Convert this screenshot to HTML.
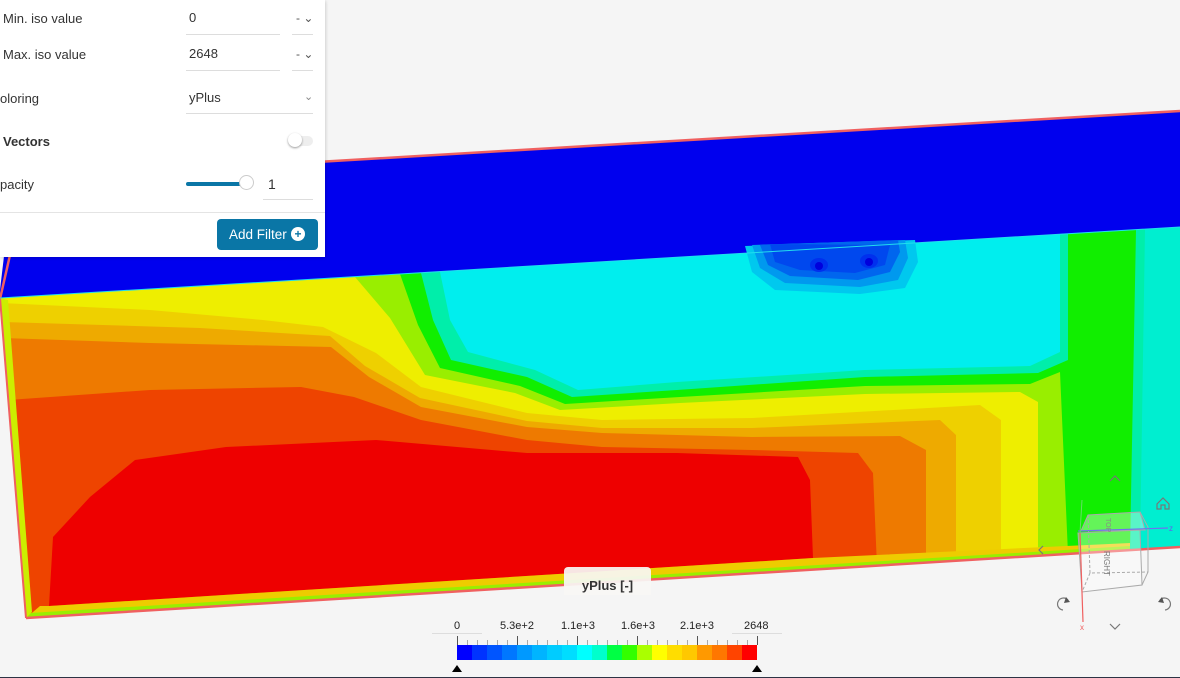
<!DOCTYPE html>
<html><head><meta charset="utf-8">
<style>
html,body{margin:0;padding:0;width:1180px;height:678px;overflow:hidden;background:#f5f5f5;font-family:"Liberation Sans",sans-serif;}
#scene{position:absolute;left:0;top:0;}
.panel{position:absolute;left:0;top:0;width:325px;height:257px;background:#fff;box-shadow:1px 1px 3px rgba(0,0,0,.15);color:#333;font-size:13px;}
.lbl{position:absolute;left:3px;}
.val{position:absolute;left:189px;}
.ul{position:absolute;height:1px;background:#ddd;}
.unit{position:absolute;left:296px;color:#555;font-size:12px;}
.btn{position:absolute;left:217px;top:219px;width:101px;height:31px;background:#0a76a6;border-radius:4px;color:#fff;font-size:13.5px;line-height:31px;}
.leg{position:absolute;font-size:11px;color:#222;}
</style></head><body>
<svg id="scene" width="1180" height="678" viewBox="0 0 1180 678">
<!-- blue strip -->
<polygon points="13,180 1180,111 1180,228 0,299 0,290" fill="#0000ee"/>
<line x1="13" y1="180" x2="1180" y2="111" stroke="#f06060" stroke-width="2.5"/>
<line x1="10" y1="255" x2="0" y2="299" stroke="#f06060" stroke-width="2.5"/>
<!-- plate base -->
<polygon points="0,298 1180,227 1180,547 26,618" fill="#00eeee"/>
<polygon points="1136,230 1180,227 1180,547 1130,550" fill="#00eed0"/>
<!-- blue blob -->
<polygon points="745,246 752,272 775,290 860,294 905,288 918,262 915,240" fill="#00c8ee"/>
<polygon points="752,245 760,268 785,283 860,287 898,280 908,258 905,240" fill="#0099ee"/>
<polygon points="760,245 768,265 790,276 858,280 890,272 900,252 898,240" fill="#0066ee"/>
<polygon points="770,244 775,262 800,270 855,273 885,265 890,245" fill="#0048ee"/>
<ellipse cx="819" cy="265" rx="9" ry="7" fill="#0030ee"/>
<ellipse cx="869" cy="261" rx="9" ry="7" fill="#0030ee"/>
<ellipse cx="819" cy="266" rx="4" ry="4" fill="#0000dd"/>
<ellipse cx="869" cy="262" rx="4" ry="4" fill="#0000dd"/>
<!-- teal band -->
<polygon points="440,272 450,320 468,352 535,370 578,390 677,382 865,370 1030,366 1060,352 1060,234 1145,229 1140,550 26,618 0,298" fill="#00eeaa"/>
<!-- green -->
<polygon points="421,273 433,320 451,360 527,377 572,397 677,390 865,377 1038,373 1068,360 1068,234 1136,230 1130,550 26,618 0,298" fill="#11ee00"/>
<!-- lime -->
<polygon points="400,274 418,325 440,368 520,386 565,404 680,397 865,386 1030,384 1060,372 1068,554 26,618 0,298" fill="#99ee00"/>
<!-- yellow -->
<polygon points="355,277 390,318 425,375 515,393 560,410 680,403 865,394 1020,392 1038,402 1038,556 26,618 0,298" fill="#eeee00"/>
<!-- yellow-orange -->
<polygon points="1,303 150,310 263,320 323,327 376,353 421,387 527,413 602,420 752,418 980,405 1001,420 1001,558 26,618" fill="#eed000"/>
<!-- amber -->
<polygon points="3,322 200,328 330,336 365,366 420,398 527,421 602,428 752,428 940,420 956,435 956,561 26,618" fill="#eeaa00"/>
<!-- orange -->
<polygon points="3,338 150,343 331,347 369,377 421,407 527,427 602,433 752,437 900,436 926,450 926,563 26,618" fill="#ee7a00"/>
<!-- orangered -->
<polygon points="8,400 150,390 301,387 354,397 421,420 527,440 602,447 752,450 858,453 873,473 877,566 26,618" fill="#ee4400"/>
<!-- red -->
<polygon points="135,460 226,447 376,440 527,453 677,453 798,457 810,480 813,558 49,606 53,537 90,497" fill="#ee0000"/>
<!-- rims -->
<polygon points="26,618 1130,550 1130,543 813,558 49,606 40,606" fill="#eecc00"/>
<polygon points="26,618 1130,550 1130,546 30,613" fill="#99ee00"/>
<line x1="26" y1="618" x2="1180" y2="547" stroke="#f06060" stroke-width="2.5"/>
<polygon points="0,298 26,618 32,612 8,300" fill="#ccee00"/>
<line x1="0" y1="298" x2="26" y2="618" stroke="#f06060" stroke-width="2"/>
<line x1="0" y1="298" x2="1180" y2="227" stroke="#22ddee" stroke-width="1"/>
<!-- legend ticks -->
<g stroke="#999" stroke-width="1">
<line x1="432" y1="633.5" x2="482" y2="633.5" stroke="#ddd"/>
<line x1="732" y1="633.5" x2="782" y2="633.5" stroke="#ddd"/>
<line x1="457.5" y1="636" x2="457.5" y2="645" stroke="#555"/>
<line x1="517.5" y1="636" x2="517.5" y2="645" stroke="#555"/>
<line x1="577.5" y1="636" x2="577.5" y2="645" stroke="#555"/>
<line x1="637.5" y1="636" x2="637.5" y2="645" stroke="#555"/>
<line x1="697.5" y1="636" x2="697.5" y2="645" stroke="#555"/>
<line x1="757.5" y1="636" x2="757.5" y2="645" stroke="#555"/>
<path d="M467.5 640v5M477.5 640v5M487.5 640v5M497.5 640v5M507.5 640v5M527.5 640v5M537.5 640v5M547.5 640v5M557.5 640v5M567.5 640v5M587.5 640v5M597.5 640v5M607.5 640v5M617.5 640v5M627.5 640v5M647.5 640v5M657.5 640v5M667.5 640v5M677.5 640v5M687.5 640v5M707.5 640v5M717.5 640v5M727.5 640v5M737.5 640v5M747.5 640v5" stroke="#aaa"/>
</g>
<g>
<rect x="457" y="645" width="15" height="15" fill="#0000ff"/>
<rect x="472" y="645" width="15" height="15" fill="#0033ff"/>
<rect x="487" y="645" width="15" height="15" fill="#0055ff"/>
<rect x="502" y="645" width="15" height="15" fill="#0077ff"/>
<rect x="517" y="645" width="15" height="15" fill="#0099ff"/>
<rect x="532" y="645" width="15" height="15" fill="#00b4ff"/>
<rect x="547" y="645" width="15" height="15" fill="#00ccff"/>
<rect x="562" y="645" width="15" height="15" fill="#00ddff"/>
<rect x="577" y="645" width="15" height="15" fill="#00ffff"/>
<rect x="592" y="645" width="15" height="15" fill="#00ffcc"/>
<rect x="607" y="645" width="15" height="15" fill="#00ff44"/>
<rect x="622" y="645" width="15" height="15" fill="#33ff00"/>
<rect x="637" y="645" width="15" height="15" fill="#aaff00"/>
<rect x="652" y="645" width="15" height="15" fill="#ffff00"/>
<rect x="667" y="645" width="15" height="15" fill="#ffdd00"/>
<rect x="682" y="645" width="15" height="15" fill="#ffc800"/>
<rect x="697" y="645" width="15" height="15" fill="#ff9900"/>
<rect x="712" y="645" width="15" height="15" fill="#ff7700"/>
<rect x="727" y="645" width="15" height="15" fill="#ff4400"/>
<rect x="742" y="645" width="15" height="15" fill="#ff0000"/>
</g>
<polygon points="457,665 452,672 462,672" fill="#000"/>
<polygon points="757,665 752,672 762,672" fill="#000"/>
<line x1="0" y1="677.5" x2="1180" y2="677.5" stroke="#2c3344"/>
<!-- nav cube -->
<g fill="none" stroke="#777" stroke-width="1.2">
<path d="M1110 481l5-5 5 5"/>
<path d="M1110 624l5 5 5-5"/>
<path d="M1043 546l-4 4 4 4"/>
<path d="M1157 509v-5l6-6 6 6v5h-4v-4h-4v4z"/>
<path d="M1068 600a6 6 0 1 0 -5 10"/>
<path d="M1160 600a6 6 0 1 1 5 10"/>
</g>
<polygon points="1066,597 1070,602 1064,603" fill="#555"/>
<polygon points="1162,597 1158,602 1164,603" fill="#555"/>
<g fill="none" stroke="#aaa" stroke-width="1">
<polygon points="1081,531 1088,515 1140,512 1145,530" fill="rgba(255,255,255,.35)"/>
<polygon points="1078,533 1140,530 1142,585 1082,592" fill="rgba(255,255,255,.35)"/>
<path d="M1140,512 L1148,527 L1148,572 L1142,585"/>
<path d="M1088,515 L1090,573 L1148,572 M1090,573 L1082,592" stroke-dasharray="3,2"/>
</g>
<line x1="1080" y1="533" x2="1083" y2="622" stroke="#f06060" stroke-width="1.2"/>
<line x1="1078" y1="531" x2="1168" y2="528" stroke="#7070ee" stroke-width="1.2"/>
<line x1="1080" y1="533" x2="1082" y2="500" stroke="#66dd66" stroke-width="1"/>
<text x="1080" y="630" font-size="8" fill="#f06060" font-family="Liberation Sans">x</text>
<text x="1169" y="531" font-size="8" fill="#6060ee" font-family="Liberation Sans">z</text>
<text x="1104" y="551" font-size="8" fill="#777" font-family="Liberation Sans" transform="rotate(90 1104 551)">RIGHT</text>
<text x="1106" y="518" font-size="7" fill="#888" font-family="Liberation Sans" transform="rotate(90 1106 518)">TOP</text>
</svg>

<div class="panel">
  <div class="lbl" style="top:11px">Min. iso value</div>
  <div class="val" style="top:10px">0</div>
  <div class="ul" style="left:186px;top:34px;width:94px"></div>
  <div class="unit" style="top:11px">- ⌄</div>
  <div class="ul" style="left:292px;top:34px;width:21px"></div>

  <div class="lbl" style="top:47px">Max. iso value</div>
  <div class="val" style="top:46px">2648</div>
  <div class="ul" style="left:186px;top:70px;width:94px"></div>
  <div class="unit" style="top:47px">- ⌄</div>
  <div class="ul" style="left:292px;top:70px;width:21px"></div>

  <div class="lbl" style="top:91px;left:0">oloring</div>
  <div class="val" style="top:90px">yPlus</div>
  <div style="position:absolute;left:304px;top:90px;color:#888;font-size:11px">⌄</div>
  <div class="ul" style="left:186px;top:113px;width:127px"></div>

  <div class="lbl" style="top:134px;font-weight:bold">Vectors</div>
  <div style="position:absolute;left:290px;top:136px;width:23px;height:10px;border-radius:5px;background:#eee"></div>
  <div style="position:absolute;left:288px;top:133px;width:14px;height:14px;border-radius:50%;background:#fff;box-shadow:0 1px 2px rgba(0,0,0,.4)"></div>

  <div class="lbl" style="top:177px;left:0">pacity</div>
  <div style="position:absolute;left:186px;top:182px;width:60px;height:4px;border-radius:2px;background:#0a76a6"></div>
  <div style="position:absolute;left:239px;top:175px;width:15px;height:15px;border-radius:50%;background:#fff;border:1px solid #ccc;box-sizing:border-box"></div>
  <div class="val" style="top:176px;left:268px;font-size:14px">1</div>
  <div class="ul" style="left:263px;top:199px;width:50px"></div>

  <div class="ul" style="left:0;top:212px;width:325px;background:#e4e4e4"></div>
  <div class="btn"><span style="margin-left:12px">Add Filter</span>
    <span style="position:absolute;left:74px;top:8px;width:14px;height:14px;border-radius:50%;background:#fff;color:#0a76a6;font-size:12px;line-height:14px;text-align:center;font-weight:bold">+</span></div>
</div>

<div style="position:absolute;left:564px;top:567px;width:87px;height:28px;background:rgba(248,246,244,.93);border-radius:4px 4px 0 0;text-align:center;font-size:13px;line-height:38px;color:#333;font-weight:bold">yPlus [-]</div>

<div class="leg" style="left:454px;top:620px">0</div>
<div class="leg" style="left:500px;top:620px">5.3e+2</div>
<div class="leg" style="left:561px;top:620px">1.1e+3</div>
<div class="leg" style="left:621px;top:620px">1.6e+3</div>
<div class="leg" style="left:680px;top:620px">2.1e+3</div>
<div class="leg" style="left:744px;top:620px">2648</div>
</body></html>
